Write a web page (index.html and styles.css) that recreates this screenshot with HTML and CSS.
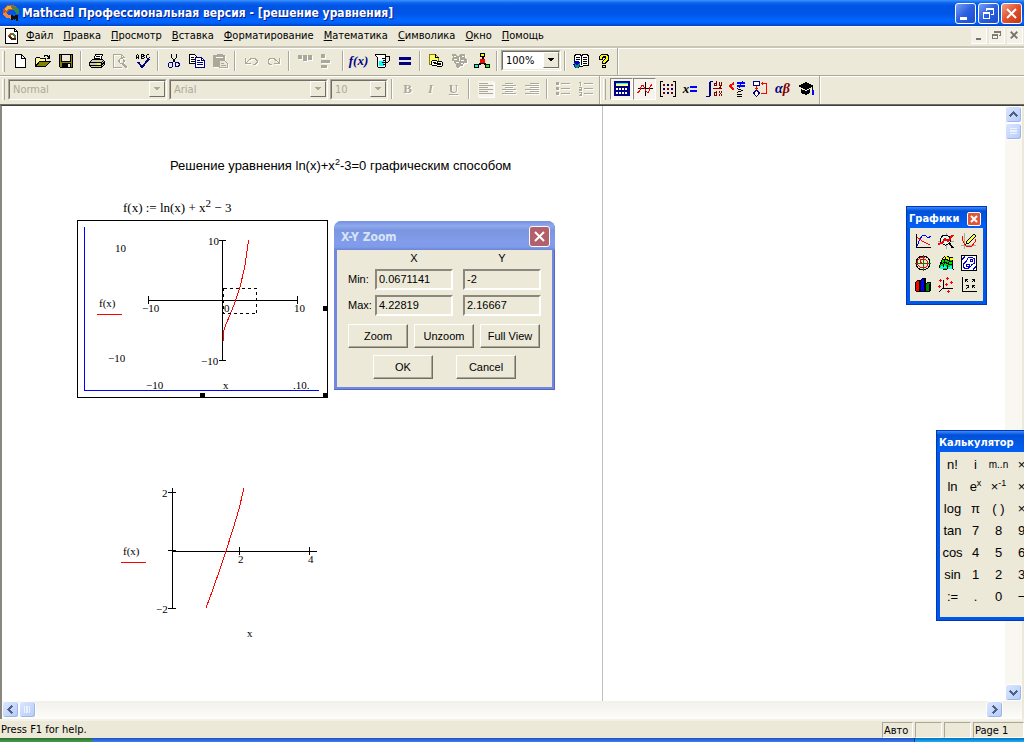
FILE: index.html
```html
<!DOCTYPE html>
<html lang="ru">
<head>
<meta charset="utf-8">
<title>Mathcad Профессиональная версия - [решение уравнения]</title>
<link rel="stylesheet" href="styles.css">
</head>
<body>
<div class="app">
  <header class="titlebar">
    <svg class="logo" viewBox="0 0 18 18"><path d="M1 9V6l2-3 3-2h5l4 2 2 3v4h-3V8l-2-2H7L5 8v2z" fill="#c8542c"/><path d="M3 4l3-2h3l1 3H7L4 7z" fill="#d8b040"/><path d="M10 2l4 1 3 3v4h-3V8l-3-2z" fill="#388848"/><path d="M1 9l3-1 1 2 5 2v3l-5-1-3-2z" fill="#f08838"/><path d="M9 16v-5h2l1 2 1-2h3v6h-2v-3l-1 2h-1l-1-2v2z" fill="#181008"/></svg>
    <h1>Mathcad Профессиональная версия - [решение уравнения]</h1>
    <div class="winbtns">
      <button class="winbtn" aria-label="Свернуть"><svg viewBox="0 0 19 19"><path d="M4 13h7v3H4z" fill="#fff"/></svg></button>
      <button class="winbtn" aria-label="Восстановить"><svg viewBox="0 0 19 19"><path d="M7.500 7V4.500h7v6H12M7 5.500h8M4.500 8.500h6v6h-6zM4 9.500h7" fill="none" stroke="#fff"/></svg></button>
      <button class="winbtn close" aria-label="Закрыть"><svg viewBox="0 0 19 19"><path class="smooth" d="M5 5l9 9M14 5l-9 9" stroke="#fff" stroke-width="2"/></svg></button>
    </div>
  </header>

  <nav class="menubar">
    <svg class="docicon" viewBox="0 0 16 18"><path d="M1.500 1.500h9l3 3v12h-12z" fill="#fff" stroke="#000"/><path d="M10.500 1.500v3h3" fill="none" stroke="#000"/><path d="M4 10V8l2-2h3l3 2v3h-2V9L9 8H7l-1 2z" fill="#b05020"/><path d="M8 6h2l2 3v1h-2z" fill="#388848"/><path d="M4 10l2-1 3 2h3v2H8z" fill="#402818"/></svg>
    <button><u>Ф</u>айл</button><button><u>П</u>равка</button><button><u>П</u>росмотр</button><button><u>В</u>ставка</button><button><u>Ф</u>орматирование</button><button><u>М</u>атематика</button><button><u>С</u>имволика</button><button><u>О</u>кно</button><button><u>П</u>омощь</button>
    <div class="docbtns">
      <button aria-label="Свернуть документ"><svg viewBox="0 0 16 16"><path d="M5 11h6v2H5z" fill="#76746a"/></svg></button>
      <button aria-label="Восстановить документ"><svg viewBox="0 0 16 16"><path d="M5.500 5V3.500h7v5H11M5 4.500h8M3.500 7.500h6v4h-6zM3 6.500h7" fill="none" stroke="#76746a"/></svg></button>
      <button aria-label="Закрыть документ"><svg viewBox="0 0 16 16"><path class="smooth" d="M4 4l7 7M11 4l-7 7" stroke="#76746a" stroke-width="2"/></svg></button>
    </div>
  </nav>

  <div class="toolrow">
    <div class="toolbar">
      <button class="tool" aria-label="Создать"><svg viewBox="0 0 16 16"><path d="M3.500 1.500h6l4 4v9h-10z" fill="#fff" stroke="#000"/><path d="M9.500 1.500v4h4" fill="none" stroke="#000"/></svg></button>
      <button class="tool" aria-label="Открыть"><svg viewBox="0 0 16 16"><path d="M.5 13.500v-8l1-1h3l1 1h5v3" fill="#ffff9c" stroke="#000"/><path d="M.5 13.500l4-5h11l-5 5z" fill="#848200" stroke="#000"/><path d="M9 3.500l1-1h2l2 2M12 5.500h2.500V2" fill="none" stroke="#000"/></svg></button>
      <button class="tool" aria-label="Сохранить"><svg viewBox="0 0 16 16"><path d="M1.500 1.500h13v13h-12l-1-1z" fill="#848200" stroke="#000"/><path d="M4 2h8v6H4z" fill="#ece9d8"/><path d="M4 10h9v5H4z" fill="#000"/><path d="M10 11h2v3h-2z" fill="#ece9d8"/><path d="M3.500 2v6h9V2" fill="none" stroke="#000"/></svg></button>
      <span class="sep"></span>
      <button class="tool" aria-label="Печать"><svg viewBox="0 0 16 16"><path d="M4.500 7.500l2-6h7l-2 6" fill="#fff" stroke="#000"/><path d="M7 3.500h4M6 5.500h5" stroke="#000"/><path d="M.5 9.500l3-3h10l2 2v3l-3 3h-10l-2-2z" fill="#cecbbd" stroke="#000"/><path d="M1 9.500h11l3-2M1 12.500h11l3-3M12.500 9v5" fill="none" stroke="#000"/><path d="M8 10h3v2H8z" fill="#ff0"/></svg></button>
      <button class="tool off" disabled aria-label="Просмотр печати"><svg viewBox="0 0 16 16"><path d="M11.500 5V3.500l-2-2h-8v13h8M9.500 1v3h3" fill="none" stroke="#aca899"/><path d="M8 5.500h3M8 10.500h3M7.500 6v4M11.500 6v4M6.500 7v2M12.500 7v2" stroke="#aca899"/><path d="M11 11l4 4" stroke="#aca899" stroke-width="2"/></svg></button>
      <button class="tool" aria-label="Орфография"><svg viewBox="0 0 16 16"><path d="M1.500 6V2.500l1-1 1 1V6M1 4.500h3M6.500 1v4.500h2l1-1-1-1h-2M6 1.500h2l1 1-1 1M14.500 2.500l-1-1h-1l-1 1v2l1 1h1l1-1" fill="none" stroke="#000"/><path d="M3 9l4 5 7-8" fill="none" stroke="#000084" stroke-width="2"/></svg></button>
      <span class="sep"></span>
      <button class="tool" aria-label="Вырезать"><svg viewBox="0 0 16 16"><path d="M5.500 1v3l4 6M10.500 1v3l-4 6" fill="none" stroke="#000"/><path d="M6 9.500H4l-1.500 1v3l1 1h2l1-1V9M9 8.500v4l1 1h2l1-1v-2l-1-1h-3" fill="none" stroke="#000084"/></svg></button>
      <button class="tool" aria-label="Копировать"><svg viewBox="0 0 16 16"><path d="M.5 1.500h5l3 3v6h-8z" fill="#fff" stroke="#000"/><path d="M2 4.500h3M2 6.500h4M2 8.500h4" stroke="#000"/><path d="M6.500 4.500h6l3 3v7h-9z" fill="#fff" stroke="#000084"/><path d="M12.500 5v2.500H15M8 7.500h3M8 9.500h6M8 11.500h6" fill="none" stroke="#000084"/></svg></button>
      <button class="tool off" disabled aria-label="Вставить"><svg viewBox="0 0 16 16"><path d="M1 2h3l1-1h5l1 1h2v5H7v7H1z" fill="#aca899"/><path d="M7.500 7.500h5l3 3v4h-8z" fill="#ece9d8" stroke="#aca899"/><path d="M9 10.500h3M9 12.500h5" stroke="#aca899"/><path d="M4 4.500h7" stroke="#fff"/></svg></button>
      <span class="sep"></span>
      <button class="tool off" disabled aria-label="Отменить"><svg viewBox="0 0 16 16"><path d="M2.500 5v5.500H8M3 10l5-4.500h4l2 2v2l-2 2h-2" fill="none" stroke="#aca899"/></svg></button>
      <button class="tool off" disabled aria-label="Вернуть"><svg viewBox="0 0 16 16"><path d="M13.500 5v5.500H8M13 10L8 5.500H4l-2 2v2l2 2h2" fill="none" stroke="#aca899"/></svg></button>
      <span class="sep"></span>
      <button class="tool off" disabled aria-label="Выровнять поперёк"><svg viewBox="0 0 16 16"><path d="M1 2h4v4H1zM6 2h4v6H6zM11 2h4v5h-4z" fill="#aca899"/></svg></button>
      <button class="tool off" disabled aria-label="Выровнять вниз"><svg viewBox="0 0 16 16"><path d="M1 1h4v4H1zM1 7h9v3H1zM1 12h6v3H1z" fill="#aca899"/></svg></button>
      <span class="sep"></span>
      <button class="tool fx" aria-label="Вставить функцию">f(x)</button>
      <button class="tool" aria-label="Вставить единицу"><svg viewBox="0 0 16 16"><path d="M3.500 4.500l-2-2v-1h10v12l-1 1h-6l-1-1z" fill="#fff" stroke="#000"/><path d="M5 8h5v5H5z" fill="#0ff"/><path d="M8 5.500h3M9 7.500h2M8 9.500h3M9 11.500h2" stroke="#000"/><path d="M12 3.500h3.500v4l-2 2H12" fill="none" stroke="#000"/></svg></button>
      <button class="tool" aria-label="Вычислить"><svg viewBox="0 0 16 16"><path d="M2 4h12v3H2zM2 9h12v3H2z" fill="#000084"/></svg></button>
      <span class="sep"></span>
      <button class="tool" aria-label="Гиперссылка"><svg viewBox="0 0 16 16"><path d="M1.500 1.500h6l3 3v7h-9z" fill="#ffff63" stroke="#848200"/><path d="M7.500 1v3.500H11" fill="none" stroke="#000"/><path d="M4.500 7.500h4l1 1h4l1 1v3l-1 1h-4l-1-1h-4l-1-1v-3z" fill="#fff" stroke="#000"/><path d="M5 9.500h3M6 10.500h7M10 11.500h3M9.500 9v3" stroke="#000"/></svg></button>
      <button class="tool off" disabled aria-label="Компонент"><svg viewBox="0 0 16 16"><path d="M1 1h4l1 2h2l1-2h5v4l2 2v3h-3l-1 3H9l-1 2H6l-1-3-2-2V8H1V5l1-1z" fill="#aca899"/><path d="M3 3.500h2M3 6.500h3M8.500 4v4M5 9.500h3M10 7.500h3M10 10.500h2M11 3.500h2" stroke="#fff"/></svg></button>
      <button class="tool" aria-label="Mathconnex"><svg viewBox="0 0 16 16"><path d="M8.500 4v5L3 13M8 9l6 4" fill="none" stroke="#000" stroke-width="2"/><path d="M6.500.5h4v3h-4z" fill="#ff0" stroke="#000"/><circle cx="8.500" cy="8" r="2.500" fill="#f00"/><path d="M.5 11.500h4v3h-4z" fill="#0ff" stroke="#000"/><path d="M11.500 11.500h4v3h-4z" fill="#0f0" stroke="#000"/></svg></button>
      <span class="sep"></span>
      <span class="combo zoom"><select aria-label="Масштаб"><option>100%</option></select><svg class="arrow" viewBox="0 0 16 16"><path d="M4 6h8l-4 4z" fill="#000"/></svg></span>
      <span class="sep"></span>
      <button class="tool" aria-label="Центр ресурсов"><svg viewBox="0 0 16 16"><path d="M1.500 2.500l2-1h3l2 1 2-1h3l2 1v10h-4l-3 1-3-1h-4z" fill="#fff" stroke="#000"/><path d="M8.500 2v10M3 4.500h4M3 6.500h4M10 4.500h4M10 6.500h4M10 8.500h4M10 10.500h4" stroke="#000"/><circle cx="4" cy="11.500" r="3.500" fill="#0000c6"/><path d="M1 10l3 2 3-2-1 4-3 1z" fill="#009a63"/></svg></button>
      <button class="tool" aria-label="Справка"><svg viewBox="0 0 16 16"><path d="M3 3l2-2h6l2 2v4l-3 3v1H6V8l3-2V5H7v2H3zM6 12h4v3H6z" fill="#000"/><path d="M4 4l1-2h5l2 2v2L9 9v1H7V8l3-2V4L9 3H7L6 4v2H4zM7 13h2v1H7z" fill="#ff0"/></svg></button>
    </div>
  </div>

  <div class="toolrow format">
    <div class="toolbar">
      <span class="combo style"><select disabled aria-label="Стиль"><option>Normal</option></select><svg class="arrow" viewBox="0 0 16 16"><path d="M4 6h8l-4 4z" fill="#aca899"/></svg></span>
      <span class="combo style"><select disabled aria-label="Шрифт"><option>Arial</option></select><svg class="arrow" viewBox="0 0 16 16"><path d="M4 6h8l-4 4z" fill="#aca899"/></svg></span>
      <span class="combo size"><select disabled aria-label="Размер"><option>10</option></select><svg class="arrow" viewBox="0 0 16 16"><path d="M4 6h8l-4 4z" fill="#aca899"/></svg></span>
      <span class="sep"></span>
      <button class="tool off letter" disabled><b>B</b></button>
      <button class="tool off letter" disabled><i>I</i></button>
      <button class="tool off letter" disabled><u>U</u></button>
      <span class="sep wide"></span>
      <button class="tool off" disabled aria-label="По левому краю"><svg class="checked" viewBox="0 0 16 16"><path d="M1 2.500h9M1 4.500h14M1 6.500h9M1 8.500h14M1 10.500h9M1 12.500h14" stroke="#aca899"/></svg></button>
      <button class="tool off" disabled aria-label="По центру"><svg viewBox="0 0 16 16"><path d="M4 2.500h8M1 4.500h14M4 6.500h8M1 8.500h14M4 10.500h8M1 12.500h14" stroke="#aca899"/></svg></button>
      <button class="tool off" disabled aria-label="По правому краю"><svg viewBox="0 0 16 16"><path d="M6 2.500h9M1 4.500h14M6 6.500h9M1 8.500h14M6 10.500h9M1 12.500h14" stroke="#aca899"/></svg></button>
      <span class="sep"></span>
      <button class="tool off" disabled aria-label="Маркеры"><svg viewBox="0 0 16 16"><path d="M1 1h3v3H1zM1 6h3v3H1zM1 11h3v3H1z" fill="#aca899"/><path d="M6 2.500h9M6 7.500h9M6 12.500h9" stroke="#aca899"/></svg></button>
      <button class="tool off" disabled aria-label="Нумерация"><svg viewBox="0 0 16 16"><path d="M1 1.500h1.500V5M1 6.500h2.500v2H1v1h3M1 11.500h2.500v3H1M2 13.500h1" fill="none" stroke="#aca899"/><path d="M6 2.500h9M6 7.500h9M6 12.500h9" stroke="#aca899"/></svg></button>
    </div>
    <div class="toolbar math">
      <button class="tool pressed" aria-label="Калькулятор"><svg viewBox="0 0 16 16"><path d="M0 0h16v15H0z" fill="#000084"/><path d="M2 2h12v1H2z" fill="#0ff"/><path d="M2 3h12v2H2z" fill="#ffff84"/><path d="M2 7h2v2H2zM5 7h2v2H5zM8 7h2v2H8zM11 7h2v2h-2zM2 11h2v2H2zM5 11h2v2H5zM8 11h2v2H8zM11 11h2v2h-2z" fill="#fff"/></svg></button>
      <button class="tool pressed" aria-label="Графики"><svg viewBox="0 0 16 16"><path d="M8.500 1v14M1 7.500h15" stroke="#000"/><path d="M.5 11.500l2-1 2-6h2l2 5 2 2h1l2-7 2-1" fill="none" stroke="#f00"/></svg></button>
      <button class="tool" aria-label="Матрицы"><svg viewBox="0 0 16 16"><path d="M3 .5H.5v15H3M13 .5h2.500v15H13" fill="none" stroke="#000"/><path d="M3 3h2v2H3zM11 3h2v2h-2zM7 7h2v2H7zM3 11h2v2H3zM11 11h2v2h-2z" fill="#840000"/><path d="M7 3h2v2H7zM3 7h2v2H3zM11 7h2v2h-2zM7 11h2v2H7z" fill="#000084"/></svg></button>
      <button class="tool xeq" aria-label="Вычисления"><i>x</i><svg viewBox="0 0 8 8"><path d="M0 1h7v2H0zM0 5h7v2H0z" fill="#00f"/></svg></button>
      <button class="tool" aria-label="Анализ"><svg viewBox="0 0 16 16"><path d="M3 1h2v14H3zM4 0h3v1H4zM0 15h4v1H0z" fill="#000084"/><path d="M7 7.500h9M10.500 0v4.500M10 2.500H8.500v2H11M13.500 1v3.500h2M15.500 1l-1 5.500H13M10.500 10v4.500M10 11.500H8.500v3H11M13 10.500l3 4M16 10.500l-3 4" fill="none" stroke="#840000"/></svg></button>
      <button class="tool" aria-label="Булевы"><svg viewBox="0 0 16 16"><path d="M5 2L1 5l4 4" fill="none" stroke="#f00" stroke-width="2"/><path d="M8 1h8v2H8zM8 4h8v2H8zM13 0h1l-3 7h-1z" fill="#00f"/><path d="M8 7.500l5 2-5 2M8 13.500h5M8 15.500h5" fill="none" stroke="#000"/></svg></button>
      <button class="tool" aria-label="Программирование"><svg viewBox="0 0 16 16"><path d="M1.500.5h6v4h-6zM4.500 9l3 3-3 3.500-3-3.500z" fill="#fff" stroke="#000084"/><path d="M4.500 5v4M3 7.500h3M9 2.500h5.500v10H9M10.500 1v3" fill="none" stroke="#f00"/></svg></button>
      <button class="tool greek" aria-label="Греческий алфавит"><i>α</i><i class="beta">β</i></button>
      <button class="tool" aria-label="Символика"><svg viewBox="0 0 16 16"><path d="M0 5l8-4 8 4-8 4z" fill="#000"/><path d="M3 8l5 2 4-2v4l-4 2-5-2z" fill="#000"/><path d="M14.500 6v4" stroke="#000"/><path d="M14 9h2v5h-2z" fill="#00f"/></svg></button>
    </div>
  </div>

  <main class="document">
    <section class="sheet">
      <p class="region heading">Решение уравнения ln(x)+x<sup>2</sup>-3=0 графическим способом</p>
      <p class="region formula">f(x) := ln(x) + x<sup>2</sup> − 3</p>
      <svg class="region plot-a" viewBox="0 0 251 178" role="img" aria-label="График f(x)">
        <path d="M.5.500h250v177H.5z" fill="#fff" stroke="#000"/>
        <path d="M7.500 7v163.500H242" fill="none" stroke="#00f"/>
        <path d="M145.500 20v121M142 20.500h7M142 140.500h7M71 80.500h149M71.500 76v8M220.500 76v8" stroke="#000"/>
        <path d="M146.500 121V112l1-4 2-5 3-7 4-10 3-8 4-13 4-17 2-13 2-15" fill="none" stroke="#f00"/>
        <path d="M146.500 68.500h33v25h-33z" fill="none" stroke="#000" stroke-dasharray="3 3"/>
        <path d="M20 94.500h25" stroke="#f00"/>
        <path d="M246 86h5v5h-5zM123 173h5v5h-5zM246 173h5v5h-5z"/>
        <g class="ticks"><text x="38" y="32">10</text><text x="31" y="142">−10</text><text x="69" y="169">−10</text><text x="216" y="169">.10.</text><text x="146" y="169">x</text><text x="22" y="87">f(x)</text><text x="131" y="25">10</text><text x="124" y="145">−10</text><text x="65" y="92">−10</text><text x="217" y="92">10</text><text x="147" y="92">0</text></g>
      </svg>
      <svg class="region plot-b" viewBox="0 0 200 160" role="img" aria-label="Увеличенный график f(x)">
        <path d="M52.500 8v121M48 12.500h8M48 70.500h8M48 128.500h8M52 71.500h145M119.500 67v8M189.500 67v8" stroke="#000"/>
        <path d="M86 128l7-19 7-20 6-18 7-22 6-20 5-21" fill="none" stroke="#f00"/>
        <path d="M1 82.500h25" stroke="#f00"/>
        <g class="ticks"><text x="42" y="17">2</text><text x="36" y="133">−2</text><text x="118" y="83">2</text><text x="188" y="83">4</text><text x="3" y="75">f(x)</text><text x="127" y="157">x</text></g>
      </svg>
    </section>
    <div class="vscroll">
      <button class="scrollbtn" aria-label="Вверх"><svg viewBox="0 0 16 16"><path d="M4 10l4-4 4 4" fill="none" stroke="#4d6185" stroke-width="2"/></svg></button>
      <button class="scrollbtn" aria-label="Ползунок"><svg viewBox="0 0 16 16"><path d="M4 4.500h8M4 6.500h8M4 8.500h8M4 10.500h8" stroke="#eef4fe"/></svg></button>
      <button class="scrollbtn last" aria-label="Вниз"><svg viewBox="0 0 16 16"><path d="M4 6l4 4 4-4" fill="none" stroke="#4d6185" stroke-width="2"/></svg></button>
    </div>
  </main>
  <div class="hscroll">
    <button class="scrollbtn" aria-label="Влево"><svg viewBox="0 0 16 16"><path d="M10 4L6 8l4 4" fill="none" stroke="#4d6185" stroke-width="2"/></svg></button>
    <button class="scrollbtn" aria-label="Ползунок"><svg viewBox="0 0 16 16"><path d="M4.500 4v8M6.500 4v8M8.500 4v8M10.500 4v8" stroke="#eef4fe"/></svg></button>
    <button class="scrollbtn last" aria-label="Вправо"><svg viewBox="0 0 16 16"><path d="M6 4l4 4-4 4" fill="none" stroke="#4d6185" stroke-width="2"/></svg></button>
  </div>

  <footer class="status">
    <span class="msg">Press F1 for help.</span>
    <span class="cell auto">Авто</span><span class="cell blank"></span><span class="cell blank"></span><span class="cell page">Page 1</span>
  </footer>
  <div class="taskbar"><span class="start"></span><span class="tray"></span></div>

  <form class="dialog" aria-label="X-Y Zoom">
    <div class="dlg-title"><span>X-Y Zoom</span><button type="button" aria-label="Закрыть"><svg viewBox="0 0 19 19"><path class="smooth" d="M5 5l9 9M14 5l-9 9" stroke="#fff" stroke-width="2"/></svg></button></div>
    <div class="dlg-body">
      <div class="fields">
        <span></span><span class="axis">X</span><span class="axis">Y</span>
        <label for="xmin">Min:</label><input id="xmin" value="0.0671141"><input aria-label="Min Y" value="-2">
        <label for="xmax">Max:</label><input id="xmax" value="4.22819"><input aria-label="Max Y" value="2.16667">
      </div>
      <div class="row"><button type="button">Zoom</button><button type="button">Unzoom</button><button type="button">Full View</button></div>
      <div class="row ok"><button type="button">OK</button><button type="button">Cancel</button></div>
    </div>
  </form>

  <aside class="palette graphs">
    <div class="pal-title"><span>Графики</span><button aria-label="Закрыть"><svg viewBox="0 0 12 12"><path class="smooth" d="M3 3l6 6M9 3l-6 6" stroke="#fff" stroke-width="2"/></svg></button></div>
    <div class="pal-grid">
      <button aria-label="График X-Y"><svg viewBox="0 0 16 16"><path d="M1.500 1v13.500H16" fill="none" stroke="#000"/><path d="M2 13l3-7 3-4h2l3 3 3-2" fill="none" stroke="#00f"/><path d="M2 4l5 4 8 4" fill="none" stroke="#f00"/></svg></button>
      <button aria-label="Масштаб"><svg viewBox="0 0 16 16"><path d="M8.500 0v16M0 8.500h16" stroke="#aca899"/><circle cx="7.500" cy="7" r="5" fill="#cff" stroke="#000"/><path d="M11 10l4 5" stroke="#000" stroke-width="2"/><path d="M0 11l4-1 3-4 3 2 5-6" fill="none" stroke="#f00" stroke-width="2"/></svg></button>
      <button aria-label="Трассировка"><svg viewBox="0 0 16 16"><path d="M3.500 0v16M0 12.500h15" stroke="#aca899"/><path d="M1 3l1 5 3 5h6l3-4V6" fill="none" stroke="#f00"/><path d="M5 11l1-3 7-7 2 2-7 7z" fill="#ffff42" stroke="#000"/></svg></button>
      <button aria-label="Полярный график"><svg viewBox="0 0 16 16"><circle cx="8" cy="8" r="7" fill="none" stroke="#000"/><path d="M8.500 0v16M0 8.500h16" stroke="#008200"/><path d="M8 8.500L5.500 7V4.500h5l2 2v4l-2 2h-5l-3-3v-4l3-3h4" fill="none" stroke="#f00"/></svg></button>
      <button aria-label="Поверхность"><svg viewBox="0 0 16 16"><path d="M1 12l4-9 3-2 3 1 4 1-1 5 1 6-4-1-4 2z" fill="#0d0" stroke="#000"/><path d="M5 3l3-2 3 2h4v2h-4L8 4 4 5z" fill="#ff0"/><path d="M2 12l4-2 3 2 5-1v3h-4l-3-1-5 1z" fill="#0ff"/><path d="M4 5l4-1 3 2h4M3 9l4-2 3 2h4M8 2L5 12M12 3l-3 11" fill="none" stroke="#000"/></svg></button>
      <button aria-label="Контурный график"><svg viewBox="0 0 16 16"><path d="M.5.500h15v15H.5z" fill="#fff" stroke="#000"/><path d="M3.500 13.500l-1-2V9l3-3 2-3.500h4l2 1.500v4l-3 2-2 3zM5.500 11.500V9h3v2l-1 1zM9.500 6.500v-2h2v2zM1 4.500l3-3M12 14.500l3-3" fill="none" stroke="#0000c6"/></svg></button>
      <button aria-label="Столбчатая диаграмма"><svg viewBox="0 0 16 16"><path d="M.5 5.500l2-2h3v11h-4l-1-1z" fill="#f00" stroke="#000"/><path d="M5.500 3.500l2-2h3v13h-5z" fill="#00f" stroke="#000"/><path d="M10.500 7.500l2-2h3v7l-2 2h-3z" fill="#080" stroke="#000"/><path d="M4 4h2v11H4zM9 2h2v13H9zM14 7h2v6l-2 2z"/></svg></button>
      <button aria-label="Точечный график"><svg viewBox="0 0 16 16"><path d="M5.500 3v8H15M5 11l-4 4" fill="none" stroke="#000"/><path d="M1 3.500h3M2.500 2v3M8 1.500h3M9.500 0v3M12 5.500h3M13.500 4v3M7 7.500h3M8.500 6v3M0 9.500h3M1.500 8v3M9 14.500h3M10.500 13v3" stroke="#f00"/></svg></button>
      <button aria-label="Векторное поле"><svg viewBox="0 0 16 16"><path d="M1.500 0v14.500H16" fill="none" stroke="#000"/><path d="M4 2l3 3M4.500 5V2.500H7M11 5l3-3M11 2.500h2.500V5M5 12l3-3M5 8.500h2.500V11M11 8l3 3M11.500 11V8.500H14" fill="none" stroke="#000"/></svg></button>
    </div>
  </aside>

  <aside class="palette calc">
    <div class="pal-title"><span>Калькулятор</span></div>
    <div class="calc-grid">
      <button>n!</button><button>i</button><button class="mn">m..n</button><button>×</button>
      <button>ln</button><button>e<sup>x</sup></button><button>×<sup>-1</sup></button><button>×</button>
      <button>log</button><button>π</button><button>( )</button><button>×</button>
      <button>tan</button><button>7</button><button>8</button><button>9</button>
      <button>cos</button><button>4</button><button>5</button><button>6</button>
      <button>sin</button><button>1</button><button>2</button><button>3</button>
      <button>:=</button><button>.</button><button>0</button><button>−</button>
    </div>
  </aside>
</div>
</body>
</html>
```
FILE: styles.css
```css
* { box-sizing: border-box; }
body { margin: 0; overflow: hidden; font: 11px/13px "DejaVu Sans Condensed", "DejaVu Sans", sans-serif; color: #000; }
button, select, input { font: inherit; color: inherit; margin: 0; padding: 0; border: 0; background: none; }
svg { display: block; shape-rendering: crispEdges; }
.smooth { shape-rendering: auto; }
.app { position: relative; height: 100vh; display: flex; flex-direction: column; background: #ece9d8; overflow: hidden; }

.titlebar { height: 26px; flex: none; display: flex; align-items: center; gap: 2px; padding: 0 2px;
  background: linear-gradient(#3a93ff 0, #0d63ee 3px, #0054e3 6px, #0056e8 14px, #0066ff 20px, #0061fa 23px, #0040c0 26px); }
.logo { width: 18px; height: 18px; }
.titlebar h1 { flex: 1; margin: 0; color: #fff; font-weight: bold; font-size: 12px; text-shadow: 1px 1px 0 #0a1883; white-space: nowrap; }
.winbtns { display: flex; gap: 2px; }
.winbtn { width: 21px; height: 21px; border: 1px solid #fff; border-radius: 3px; background: linear-gradient(135deg, #7a9ff0, #2a5fe0 50%, #1d4fd0); }
.winbtn.close { background: linear-gradient(135deg, #f0a080, #e05030 50%, #c83410); }

.menubar { flex: none; height: 20px; display: flex; align-items: center; gap: 10px; padding: 0 0 2px 4px; border-top: 1px solid #f8f8f4; }
.menubar button { white-space: nowrap; }
.docicon { width: 16px; height: 18px; margin-right: -4px; }
.docbtns { display: flex; gap: 2px; margin-left: auto; padding-right: 1px; }
.docbtns button { width: 16px; height: 16px; background: #f4f2e8; border-right: 1px solid #fff; border-bottom: 1px solid #fff; }

.toolrow { flex: none; display: flex; height: 29px; border-top: 2px solid #c9c6b8; box-shadow: inset 0 1px #fff; }
.toolbar { display: flex; align-items: center; padding: 0 2px 2px 8px; border-right: 1px solid #aca899; box-shadow: 1px 0 #fff; background: linear-gradient(#fff, #fff) 2px 3px / 1px 21px no-repeat, linear-gradient(#aca899, #aca899) 4px 3px / 1px 21px no-repeat; }
.format { height: 30px; border-top: 1px solid #aca899; border-bottom: 1px solid #716f64; }
.tool { width: 23px; height: 22px; display: flex; align-items: center; justify-content: center; flex: none; }
.tool svg { width: 16px; height: 16px; }
.tool.off { color: #aca899; filter: drop-shadow(1px 1px 0 #fff); }
.sep { width: 8px; height: 20px; flex: none; background: linear-gradient(90deg, transparent 3px, #aca899 3px, #aca899 4px, #fff 4px, #fff 5px, transparent 5px); }
.sep.wide { width: 9px; }
.letter { font: bold 13px/16px "Liberation Serif", serif; }
.fx { font: italic bold 13px/16px "Liberation Serif", serif; color: #000084; }
.checked { background: #f6f4ec; }
.math { padding-left: 9px; margin-left: 1px; }
.pressed { border: 1px solid; border-color: #8a887c #fff #fff #8a887c; background: #f6f4ec; }
.xeq { font: bold 13px/14px "Liberation Serif", serif; gap: 1px; }
.tool.xeq svg { width: 8px; height: 8px; }
.greek { font: bold 14px/16px "Liberation Serif", serif; color: #000084; }
.beta { color: #840000; }

.combo { position: relative; display: block; height: 21px; flex: none; border: 1px solid; border-color: #aca899 #fff #fff #aca899; }
.combo select { appearance: none; width: 100%; height: 19px; padding-left: 3px; border: 1px solid; border-color: #716f64 #ece9d8 #ece9d8 #716f64; border-radius: 0; background: #fff; opacity: 1; }
.combo select:disabled { background: #ece9d8; color: #aca899; }
.arrow { position: absolute; right: 1px; top: 1px; width: 16px; height: 16px; background: #ece9d8; border: 1px solid; border-color: #fff #716f64 #716f64 #fff; pointer-events: none; }
.zoom { width: 60px; }
.style { width: 159px; margin-right: 2px; }
.size { width: 58px; }

.document { flex: 1; min-height: 0; display: flex; border-top: 1px solid #404040; border-left: 2px solid #8a887c; background: #fff; }
.sheet { position: relative; flex: 1; overflow: hidden; background: linear-gradient(#c0c0c0, #c0c0c0) 600px 0 / 1px 100% no-repeat; }
.region { position: absolute; margin: 0; white-space: nowrap; }
.region sup { line-height: 0; }
.heading { left: 168px; top: 52px; font: 13px/16px "Liberation Sans", Arial, sans-serif; }
.heading sup { font-size: 9px; }
.formula { left: 121px; top: 93px; font: 13px/18px "Liberation Serif", serif; }
.formula sup { font-size: 11px; }
.plot-a { left: 75px; top: 114px; width: 251px; height: 178px; }
.plot-b { left: 118px; top: 374px; width: 200px; height: 160px; }
.ticks { font: 11px "Liberation Serif", serif; }

.vscroll { width: 19px; display: flex; flex-direction: column; background: #f8f7f2; border-right: 2px solid #ece9d8; }
.hscroll { flex: none; display: flex; height: 18px; padding: 0 19px 0 0; background: linear-gradient(#f1f0ea, #fdfdfa); border-left: 2px solid #8a887c; border-right: 2px solid #ece9d8; }
.scrollbtn { width: 17px; height: 17px; flex: none; border: 1px solid #fff; border-radius: 3px; background: linear-gradient(135deg, #dbe6ff, #b5cbf9); box-shadow: inset -1px -1px #9cb6e8; }
.scrollbtn svg { width: 15px; height: 15px; }
.vscroll .last { margin-top: auto; }
.hscroll .last { margin-left: auto; }

.status { flex: none; display: flex; align-items: center; gap: 2px; height: 19px; border-top: 2px solid #f4f2e8; padding-left: 1px; }
.msg { flex: 1; }
.cell { height: 16px; padding: 1px; border: 1px solid; border-color: #aca899 #fff #fff #aca899; white-space: nowrap; }
.auto { width: 31px; }
.blank { width: 27px; }
.page { width: 51px; }
.taskbar { flex: none; display: flex; height: 4px; background: linear-gradient(#1f4fc8, #3c81f0); }
.start { width: 93px; background: linear-gradient(#2c6c34, #45a045); border-radius: 0 4px 0 0; }
.tray { width: 110px; margin-left: auto; background: linear-gradient(#0b6cc0, #18b4f4); border-left: 1px solid #0a3a80; }

.dialog { position: absolute; left: 334px; top: 221px; width: 221px; margin: 0; padding: 0 3px 3px; background: #7288e0; border-radius: 8px 8px 0 0; font: 11px/13px "Liberation Sans", Arial, sans-serif; box-shadow: inset -1px -1px #5468c0; }
.dlg-title { display: flex; align-items: center; justify-content: space-between; height: 29px; margin: 0 -3px; padding: 2px 5px 0 7px; border-radius: 7px 7px 0 0; background: linear-gradient(#7790e0, #8fa9ec 5px, #7a96e0 9px, #809cea 20px, #7f9bea 26px, #6c84d4); color: #d8e4f8; font: bold 12px/16px "DejaVu Sans Condensed", sans-serif; }
.dlg-title button { width: 21px; height: 21px; border: 1px solid #fff; border-radius: 3px; background: #b4606c; }
.dlg-body { padding: 3px 10px 8px; background: #ece9d8; }
.fields { display: grid; grid-template-columns: 18px 78px 78px; column-gap: 10px; row-gap: 5px; grid-template-rows: 11px 21px 21px; align-items: center; }
.axis { text-align: center; }
.fields label { white-space: nowrap; padding-left: 1px; }
.fields input { width: 78px; height: 21px; padding: 0 2px 2px; border: 2px solid; border-color: #8a887c #fff #fff #8a887c; }
.row { display: flex; gap: 6px; margin: 8px 0 0 1px; }
.row button { width: 60px; height: 24px; border: 1px solid; border-color: #fff #716f64 #716f64 #fff; box-shadow: inset -1px -1px #aca899; }
.row.ok { gap: 23px; margin: 7px 0 0 26px; }

.palette { position: absolute; background: #0058e8; border: 1px solid #0038b8; padding: 0 3px 3px; }
.pal-title { display: flex; align-items: center; justify-content: space-between; height: 21px; margin: 0 -3px; padding: 2px 5px 0 2px; background: linear-gradient(#3c8cff, #0050d8 4px, #0060f4); color: #fff; font-weight: bold; font-size: 11px; white-space: nowrap; }
.pal-title button { width: 14px; height: 14px; border: 1px solid #fff; border-radius: 2px; background: #e0563a; }
.pal-title svg { width: 12px; height: 12px; }
.graphs { left: 906px; top: 206px; width: 81px; }
.pal-grid { display: grid; grid-template-columns: repeat(3, 23px); grid-auto-rows: 22px; padding: 2px 0 5px 1px; background: #ece9d8; }
.pal-grid button { display: grid; place-items: center; }
.pal-grid svg { width: 16px; height: 16px; }
.calc { left: 936px; top: 430px; right: 0; border-right: 0; padding-right: 0; overflow: hidden; font: 13px/20px "Liberation Sans", Arial, sans-serif; }
.calc .pal-title { font-family: "DejaVu Sans Condensed", sans-serif; margin-right: 0; }
.calc-grid { display: grid; grid-template-columns: repeat(4, 23px); grid-auto-rows: 22px; padding: 2px 0 9px 1px; background: #ece9d8; }
.calc-grid sup { font-size: 9px; line-height: 0; }
.calc-grid .mn { font-size: 10px; }
```
